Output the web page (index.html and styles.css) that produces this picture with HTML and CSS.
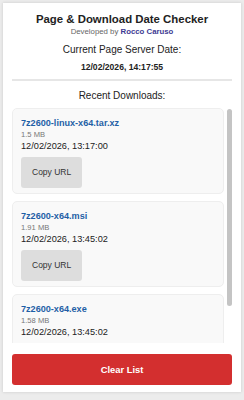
FILE: index.html
```html
<!DOCTYPE html>
<html lang="en">
<head>
    <meta charset="UTF-8">
    <meta name="viewport" content="width=device-width, initial-scale=1.0">
    <title>Page &amp; Download Date Checker</title>
    <link rel="stylesheet" href="styles.css">
</head>
<body>

<div class="popup">
    <h1 class="title">Page &amp; Download Date Checker</h1>
    <div class="credit">Developed by <b>Rocco Caruso</b></div>

    <!-- server date of the current tab -->
    <div class="label">Current Page Server Date:</div>
    <div class="server-date">12/02/2026, 14:17:55</div>

    <hr class="divider">

    <div class="label recent">Recent Downloads:</div>

    <!-- download list -->
    <div class="list-wrap">
        <div class="download-list">
            <div class="download-item">
                <a class="file-name" href="#">7z2600-linux-x64.tar.xz</a>
                <div class="file-size">1.5 MB</div>
                <div class="file-date">12/02/2026, 13:17:00</div>
                <button class="copy-btn">Copy URL</button>
            </div>
            <div class="download-item">
                <a class="file-name" href="#">7z2600-x64.msi</a>
                <div class="file-size">1.91 MB</div>
                <div class="file-date">12/02/2026, 13:45:02</div>
                <button class="copy-btn">Copy URL</button>
            </div>
            <div class="download-item">
                <a class="file-name" href="#">7z2600-x64.exe</a>
                <div class="file-size">1.58 MB</div>
                <div class="file-date">12/02/2026, 13:45:02</div>
                <button class="copy-btn">Copy URL</button>
            </div>
        </div>
        <div class="scroll-thumb"></div>
    </div>

    <button class="clear-btn">Clear List</button>
</div>

</body>
</html>
```

FILE: styles.css
```css
body {
    font-family: "Liberation Sans", Arial, sans-serif;
    background-color: #ececec;
    margin: 0;
}
.popup {
    margin: 3px;
    height: 389px;
    box-sizing: border-box;
    padding: 9px 9px 7px;
    background-color: #fff;
    box-shadow: 0 0 3px rgba(0, 0, 0, 0.15);
    display: flex;
    flex-direction: column;
    text-align: center;
    color: #222;
}
.title {
    font-size: 11.4px;
    font-weight: bold;
    margin: 0;
    padding-top: 0.5px;
}
.credit {
    font-size: 7.8px;
    color: #666;
    margin-top: 2px;
}
.credit b {
    color: #3d3a92;
}
.label {
    font-size: 10px;
    margin-top: 8.5px;
}
.server-date {
    font-size: 8.6px;
    font-weight: bold;
    margin-top: 6.8px;
}
.divider {
    border: 0;
    border-top: 2px solid #e6e6e6;
    margin: 7px 0 0;
}
.recent {
    margin-top: 9px;
}
.list-wrap {
    position: relative;
    flex: 1;
    min-height: 0;
    margin-top: 7px;
    display: flex;
}
.download-list {
    flex: 1;
    overflow-y: auto;
    scrollbar-width: none;
    padding-right: 8px;
    text-align: left;
}
.download-list::-webkit-scrollbar {
    display: none;
}
/* scrollbar drawn by hand, the headless browser hides the real one */
.scroll-thumb {
    position: absolute;
    top: 1px;
    right: 0;
    width: 5px;
    height: 197px;
    background: #c4c4c4;
    border-radius: 3px;
}
.download-item {
    background-color: #f9f9f9;
    border: 1px solid #eee;
    border-radius: 5px;
    padding: 9px 8px 5px;
    margin-bottom: 7px;
}
.file-name {
    display: block;
    font-size: 9.1px;
    font-weight: bold;
    color: #1f5fa6;
    text-decoration: none;
}
.file-size {
    font-size: 7.6px;
    color: #777;
    margin-top: 2px;
}
.file-date {
    font-size: 9.2px;
    color: #222;
    margin-top: 2px;
}
.copy-btn {
    font-family: inherit;
    font-size: 8.5px;
    color: #333;
    background-color: #ddd;
    border: none;
    border-radius: 3px;
    height: 31px;
    padding: 0 11px;
    margin-top: 6px;
    cursor: pointer;
}
.clear-btn {
    font-family: inherit;
    font-size: 9.4px;
    font-weight: bold;
    color: #fff;
    background-color: #d32f2f;
    border: none;
    border-radius: 3px;
    height: 31px;
    width: 100%;
    margin-top: 11px;
    flex-shrink: 0;
    cursor: pointer;
}
```
